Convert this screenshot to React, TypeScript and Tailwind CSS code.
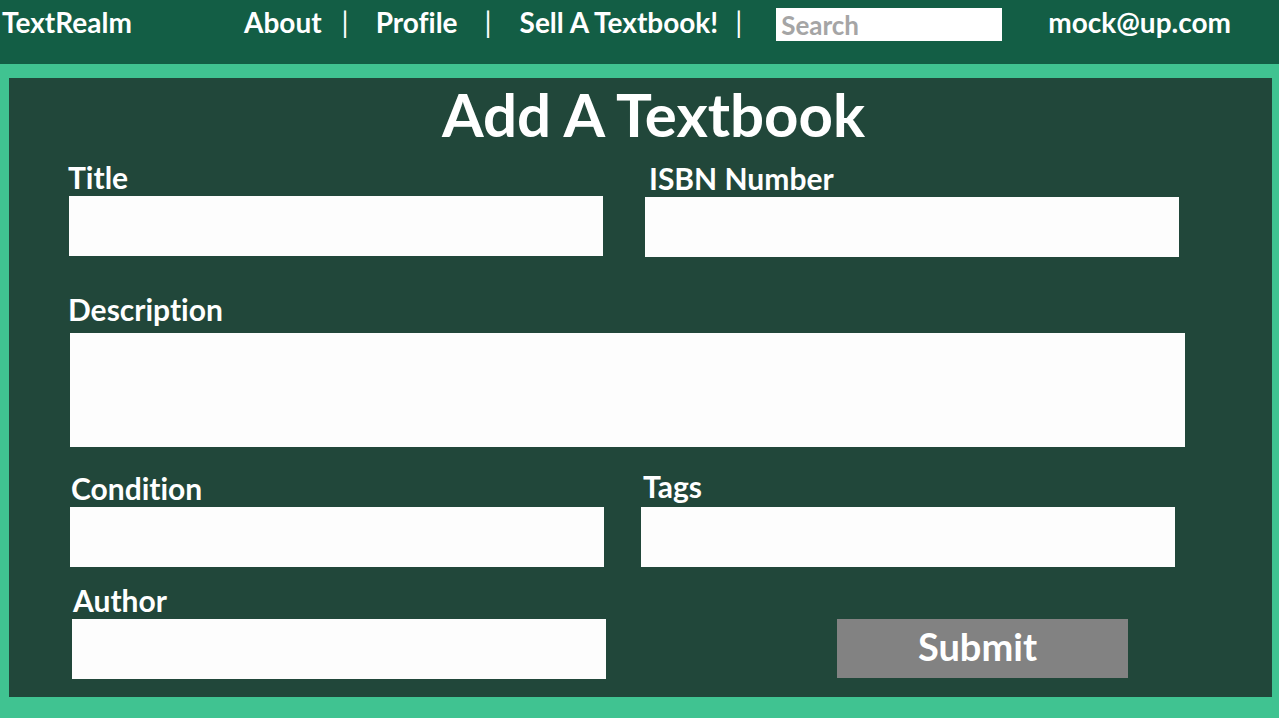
import { useState } from 'react';

const Field = ({ label, className, inputClass }: { label: string; className: string; inputClass: string }) => (
  <div className={`flex flex-col ${className}`}>
    <label className="text-[30px] font-bold leading-[30px] mb-[4px] text-white">{label}</label>
    <input className={`bg-[#fdfdfd] outline-none ${inputClass}`} />
  </div>
);

const App = () => {
  const [query, setQuery] = useState('');

  return (
    <div
      className="w-[1279px] h-[718px] bg-[#40c391] overflow-hidden [font-variant-ligatures:none]"
      style={{ fontFamily: 'Lato, "Noto Sans", sans-serif' }}
    >
      <header className="h-[64px] bg-[#135e45] flex items-start pt-[5px] text-white text-[28px] font-bold leading-[34px]">
        <span className="ml-[2px] w-[242px]">TextRealm</span>
        <nav className="flex items-start">
          <span>About</span>
          <span className="ml-[20px] font-normal">|</span>
          <span className="ml-[27px]">Profile</span>
          <span className="ml-[27px] font-normal">|</span>
          <span className="ml-[28px]">Sell A Textbook!</span>
          <span className="ml-[17px] font-normal">|</span>
        </nav>
        <input
          value={query}
          onChange={(e) => setQuery(e.target.value)}
          placeholder="Search"
          className="ml-[34px] mt-[3px] w-[226px] h-[33px] bg-white px-[5px] text-[26px] font-bold text-gray-700 placeholder:text-[#a5a5a5] outline-none"
        />
        <span className="ml-[46px]">mock@up.com</span>
      </header>

      <main className="ml-[9px] mt-[14px] w-[1263px] h-[619px] bg-[#21473a]">
        <h1 className="text-center text-[60px] font-bold leading-[64px] pt-[4px] pl-[26px] text-white">Add A Textbook</h1>

        <div className="flex mt-[16px]">
          <Field label="Title" className="ml-[59px]" inputClass="ml-[1px] w-[534px] h-[60px]" />
          <Field label="ISBN Number" className="ml-[46px] pt-[1px]" inputClass="-ml-[4px] w-[534px] h-[60px]" />
        </div>

        <Field label="Description" className="ml-[59px] mt-[37px]" inputClass="mt-[5px] ml-[2px] w-[1115px] h-[114px]" />

        <div className="flex mt-[24px]">
          <Field label="Condition" className="ml-[62px] pt-[2px]" inputClass="-ml-[1px] w-[534px] h-[60px]" />
          <Field label="Tags" className="ml-[39px]" inputClass="-ml-[2px] mt-[2px] w-[534px] h-[60px]" />
        </div>

        <div className="flex items-end mt-[18px]">
          <Field label="Author" className="ml-[64px]" inputClass="-ml-[1px] w-[534px] h-[60px]" />
          <button className="ml-[231px] w-[291px] h-[59px] mb-[1px] pr-[10px] pb-[6px] bg-[#828282] text-white text-[38px] font-bold leading-[40px]">
            Submit
          </button>
        </div>
      </main>
    </div>
  );
};

export default App;
